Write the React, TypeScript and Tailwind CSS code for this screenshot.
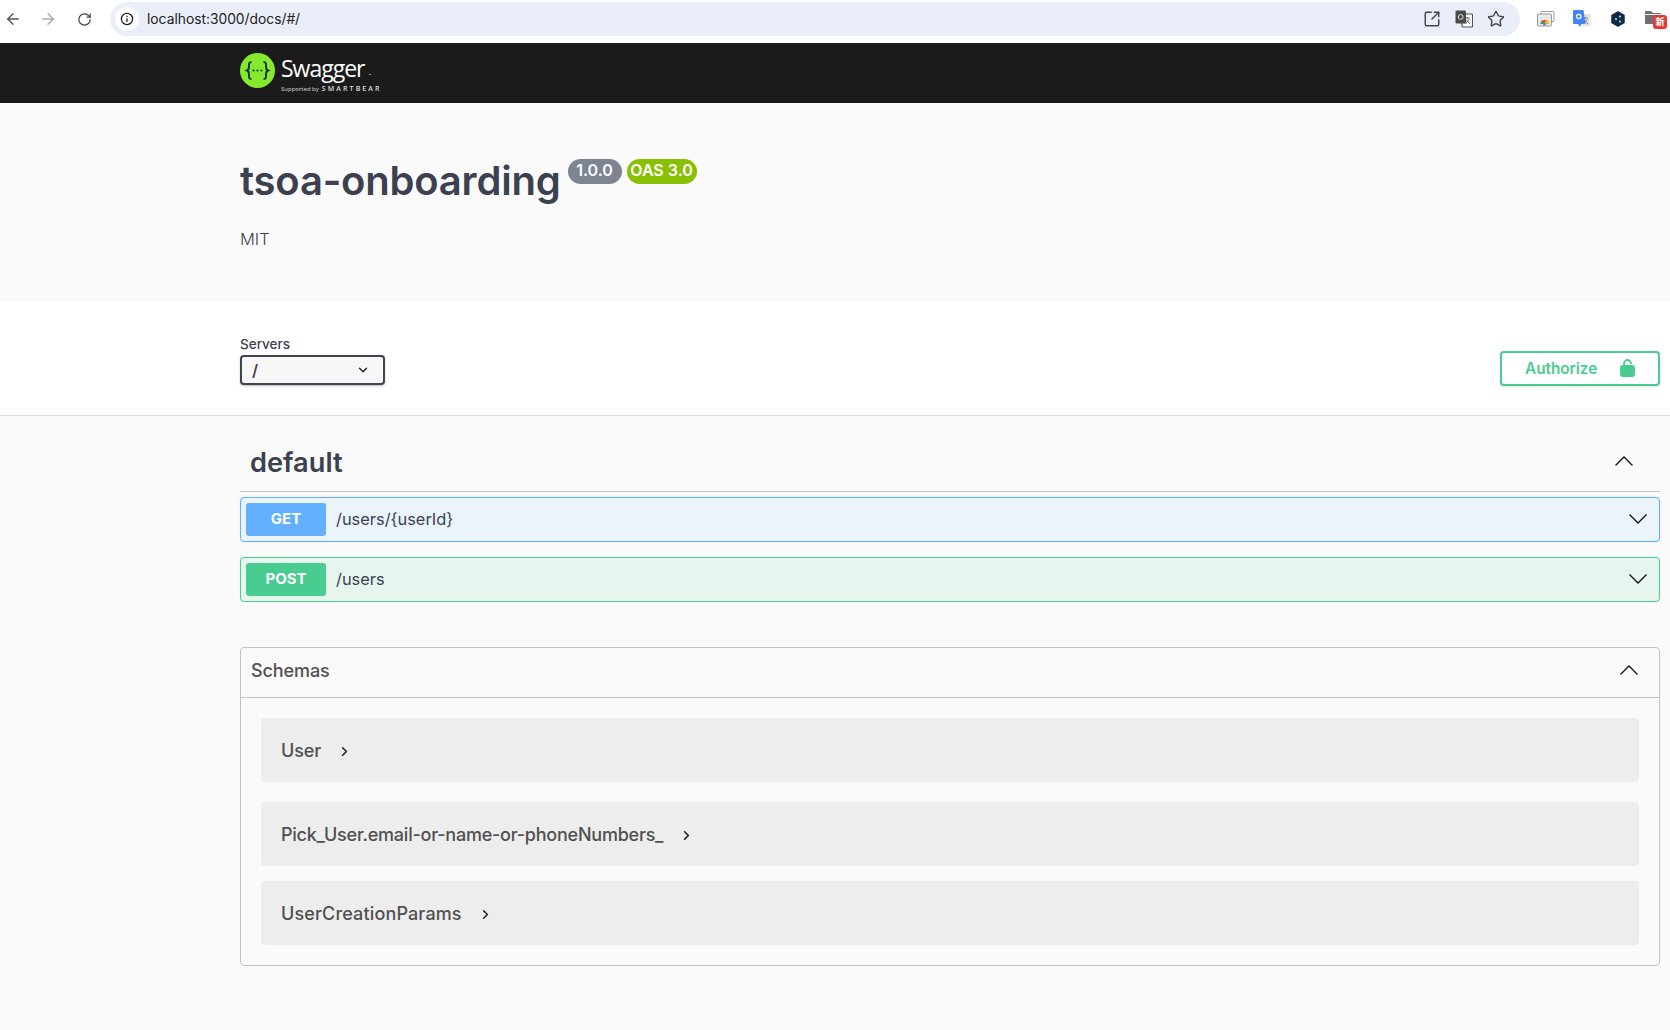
import { ArrowLeft, ArrowRight, RotateCw, Star, SquareArrowOutUpRight, ChevronDown, ChevronRight } from 'lucide-react';

const FONT = "font-['Inter',sans-serif]";

const Caret = ({ up = false }: { up?: boolean }) => (
  <svg width="20" height="20" viewBox="0 0 20 20" fill="none" stroke="#111" strokeWidth="1.3">
    <path d={up ? 'M1.5 14.5 10 6l8.5 8.5' : 'M1.5 5.5 10 14l8.5-8.5'} />
  </svg>
);

const TranslateIcon = () => (
  <svg width="18" height="18" viewBox="0 0 18 18">
    <rect x="7" y="4" width="10.5" height="13" rx="1" fill="#fff" stroke="#555" strokeWidth="1.2" />
    <path d="M10 8h5M12.5 7v1.5M10.5 14l4-5M11 9.5l4 4.5" stroke="#555" strokeWidth="0.9" fill="none" />
    <rect x="0.5" y="0.5" width="10.5" height="13" rx="1.2" fill="#4a4a4a" />
    <circle cx="5.7" cy="7" r="2.4" fill="none" stroke="#ddd" strokeWidth="1" />
  </svg>
);

const ToolbarExtensions = () => (
  <div className="flex items-center ml-[17px] gap-[18px] h-[34px]">
    <svg width="18" height="16" viewBox="0 0 18 16">
      <rect x="4" y="0.5" width="13" height="10" rx="1" fill="#fff" stroke="#999" />
      <rect x="0.5" y="3" width="14" height="12" rx="1" fill="#e9e9e9" stroke="#999" />
      <path d="M3.5 13a4 4 0 0 1 8 0z" fill="#ea4335" />
      <path d="M7.5 13a4 4 0 0 1 4-4v4z" fill="#fbbc05" />
      <path d="M3.5 13a4 4 0 0 1 2-3.4L7.5 13z" fill="#34a853" />
      <circle cx="7.5" cy="13" r="1.5" fill="#4285f4" />
    </svg>
    <svg width="18" height="18" viewBox="0 0 18 18">
      <rect x="7" y="4" width="10.5" height="12" fill="#e4e4e4" />
      <path d="M10 8h5M12.5 7v1.5M10.5 14l4-5M11 9.5l4 4.5" stroke="#777" strokeWidth="0.9" fill="none" />
      <path d="M0 1a1 1 0 0 1 1-1h9.5l2 14H8l-1 3-2-3H1a1 1 0 0 1-1-1z" fill="#4285f4" />
      <circle cx="5.7" cy="6.5" r="2.2" fill="none" stroke="#fff" strokeWidth="1.2" />
    </svg>
    <svg width="18" height="18" viewBox="0 0 18 18">
      <path d="M9 2 15 5.500v7L9 16 3 12.500v-7z" fill="#13294b" stroke="#13294b" strokeWidth="1.5" strokeLinejoin="round" />
      <circle cx="11" cy="6.500" r="1" fill="#8fd" />
      <circle cx="7" cy="9" r="1" fill="#8fd" />
      <circle cx="11" cy="11.500" r="1" fill="#8fd" />
    </svg>
    <div className="relative w-[20px] h-[18px]">
      <svg width="16" height="13" viewBox="0 0 16 13" className="mt-[1px]">
        <path d="M0 1a1 1 0 0 1 1-1h5l2 2h7a1 1 0 0 1 1 1v9a1 1 0 0 1-1 1H1a1 1 0 0 1-1-1z" fill="#6f6f6f" />
        <rect x="0" y="3" width="16" height="1" fill="#eee" />
      </svg>
      <span className="absolute left-[8px] top-[5px] w-[14px] h-[14px] rounded-[3px] bg-[#e53935] text-white text-[9px] leading-[14px] text-center font-bold font-['Noto_Sans_CJK_JP',sans-serif]">新</span>
    </div>
  </div>
);

const BrowserBar = () => (
  <div className={`h-[43px] bg-white flex items-start pt-[2px] ${FONT}`}>
    <div className="flex items-center h-[34px] gap-[17px] pl-[4px] w-[110px]">
      <ArrowLeft size={18} strokeWidth={1.8} className="text-[#555]" />
      <ArrowRight size={18} strokeWidth={1.8} className="text-[#aaa]" />
      <RotateCw size={15} strokeWidth={2} className="text-[#444] ml-[3px]" />
    </div>
    <div className="w-[1410px] h-[34px] rounded-full bg-[#e9eef8] flex items-center pl-[5px] pr-[15px]">
      <span className="w-[24px] h-[24px] rounded-full bg-white flex items-center justify-center">
        <svg width="14" height="14" viewBox="0 0 14 14" fill="none" stroke="#222" strokeWidth="1.3">
          <circle cx="7" cy="7" r="5.6" />
          <path d="M7 6.300v3.700M7 3.700v1.400" />
        </svg>
      </span>
      <span className="ml-[8px] text-[13.8px] text-[#222]">localhost:3000/docs/#/</span>
      <div className="ml-auto flex items-center gap-[14px]">
        <SquareArrowOutUpRight size={18} strokeWidth={1.9} className="text-[#444]" />
        <TranslateIcon />
        <Star size={18} strokeWidth={1.9} className="text-[#444]" />
      </div>
    </div>
    <ToolbarExtensions />
  </div>
);

const SwaggerHeader = () => (
  <div className="h-[60px] bg-[#1b1b1b] pl-[240px] flex items-center">
    <svg width="35" height="35" viewBox="0 0 35 35" className="mb-[5px]">
      <circle cx="17.500" cy="17.500" r="17.500" fill="#85ea2d" />
      <path d="M11.500 9c-3 0-2.500 2.200-2.500 4.700 0 2-.8 3.300-2 3.800 1.200.5 2 1.800 2 3.800 0 2.500-.5 4.700 2.500 4.700M23.500 9c3 0 2.500 2.200 2.500 4.700 0 2 .8 3.300 2 3.800-1.200.5-2 1.800-2 3.800 0 2.500.5 4.700-2.500 4.700" fill="none" stroke="#173646" strokeWidth="2" />
      <circle cx="13.500" cy="17.500" r="1.100" fill="#173646" />
      <circle cx="17.500" cy="17.500" r="1.100" fill="#173646" />
      <circle cx="21.500" cy="17.500" r="1.100" fill="#173646" />
    </svg>
    <div className="ml-[6px] pt-[2px] flex flex-col text-white font-['Open_Sans',sans-serif]">
      <span className="flex items-end text-[23px] leading-[28px] tracking-[-1px]">
        Swagger
        <span className="ml-[4px] mb-[7px] w-[2px] h-[1px] bg-[#999]" />
      </span>
      <span className="mt-[2px] flex items-baseline gap-[3px] leading-[10px] text-[#ddd]">
        <span className="text-[6px]">Supported by</span>
        <span className="text-[7px] tracking-[2.100px] font-semibold">SMARTBEAR</span>
      </span>
    </div>
  </div>
);

const InfoSection = () => (
  <div className="h-[198px] bg-[#fafafa] pl-[240px] pt-[54px]">
    <div className="flex items-start">
      <h1 className="text-[40px] leading-[48px] font-semibold text-[#3b4151] tracking-[-0.2px]">tsoa-onboarding</h1>
      <span className="ml-[7px] mt-[2px] h-[25px] w-[54px] rounded-full bg-[#7d8492] text-white text-[16px] leading-[23px] font-semibold text-center">1.0.0</span>
      <span className="ml-[5px] mt-[2px] h-[25px] w-[70px] rounded-full bg-[#89bf04] text-white text-[16px] leading-[23px] font-semibold text-center">OAS 3.0</span>
    </div>
    <p className="mt-[23px] text-[16.500px] leading-[22px] font-light text-[#3b4151]">MIT</p>
  </div>
);

const ServersBar = () => (
  <div className="h-[115px] bg-white border-b border-[#dcdcdc] pl-[240px] pr-[10px] shadow-[0_1px_2px_rgba(0,0,0,0.08)] flex justify-between items-start pt-[35px]">
    <div className="flex flex-col">
      <span className="text-[13.500px] leading-[16px] font-medium text-[#3b4151]">Servers</span>
      <div className="mt-[3px] w-[145px] h-[30px] rounded-[4px] border-2 border-[#41444e] bg-[#f7f7f7] shadow-[0_1px_2px_rgba(0,0,0,0.25)] flex items-center justify-between pl-[10px] pr-[13px]">
        <span className="text-[16px] font-semibold text-[#3b4151]">/</span>
        <ChevronDown size={14} strokeWidth={2.4} className="text-[#222]" />
      </div>
    </div>
    <button className="mt-[15px] w-[160px] h-[35px] rounded-[4px] border-2 border-[#49cc90] bg-white flex items-center pl-[23px] text-[#49cc90] text-[15.300px] font-semibold shadow-[0_1px_2px_rgba(0,0,0,0.1)]">
      <span className="mt-[2px]">Authorize</span>
      <svg width="15" height="18" viewBox="0 0 15 18" className="ml-[23px] mb-[1px]">
        <path d="M4 7V4.500a3.500 3.500 0 0 1 7 0V5" fill="none" stroke="#49cc90" strokeWidth="1.800" />
        <rect x="0" y="6" width="15" height="12" rx="3" fill="#49cc90" />
      </svg>
    </button>
  </div>
);

const OpRow = ({ method, path, border, bg, badge, gap }: { method: string; path: string; border: string; bg: string; badge: string; gap: string }) => (
  <div className={`h-[45px] rounded-[4px] border ${border} ${bg} ${gap} flex items-center pl-[5px] pr-[11px] shadow-[0_0_2px_rgba(0,0,0,0.08)]`}>
    <span className={`w-[80px] h-[33px] pb-[1px] rounded-[3px] ${badge} text-white text-[15px] font-bold flex items-center justify-center`}>{method}</span>
    <span className="ml-[10px] mb-[1px] text-[16.400px] text-[#3b4151]">{path}</span>
    <span className="ml-auto mb-[2px]"><Caret /></span>
  </div>
);

const SchemaRow = ({ name, gap, tracking }: { name: string; gap: string; tracking: string }) => (
  <div className={`h-[64px] rounded-[4px] bg-[#ededed] ${gap} flex items-center pl-[20px]`}>
    <span className={`text-[18px] font-medium text-[#505050] ${tracking}`}>{name}</span>
    <ChevronRight size={15} strokeWidth={2.6} className="ml-[16px] mt-[3px] text-[#222]" />
  </div>
);

const Operations = () => (
  <div className="bg-[#fafafa] pl-[240px] pr-[10px] pb-[65px]">
    <div className="h-[76px] border-b border-[#c4c4c4] flex items-center justify-between pl-[10px] pr-[26px]">
      <h2 className="mt-[20px] text-[27.200px] font-semibold text-[#3b4151]">default</h2>
      <span className="mt-[14px]"><Caret up /></span>
    </div>
    <div className="mt-[5px]">
      <OpRow method="GET" path="/users/{userId}" border="border-[#61affe]" bg="bg-[#ebf3fb]" badge="bg-[#61affe]" gap="mb-[15px]" />
      <OpRow method="POST" path="/users" border="border-[#49cc90]" bg="bg-[#e7f5ef]" badge="bg-[#49cc90]" gap="" />
    </div>
    <div className="mt-[45px] rounded-[4px] border border-[#c4c4c4]">
      <div className="h-[50px] border-b border-[#c4c4c4] flex items-center justify-between pl-[10px] pr-[20px]">
        <span className="mb-[4px] text-[18px] font-medium text-[#505050] tracking-[-0.1px]">Schemas</span>
        <span className="mb-[6px]"><Caret up /></span>
      </div>
      <div className="px-[20px] pt-[20px] pb-[20px]">
        <SchemaRow name="User" gap="mb-[20px]" tracking="tracking-[-0.1px]" />
        <SchemaRow name="Pick_User.email-or-name-or-phoneNumbers_" gap="mb-[15px]" tracking="tracking-[-0.23px]" />
        <SchemaRow name="UserCreationParams" gap="" tracking="tracking-[0.14px]" />
      </div>
    </div>
  </div>
);

export default function App() {
  return (
    <div className={`w-full min-h-[1030px] bg-[#fafafa] ${FONT}`}>
      <BrowserBar />
      <SwaggerHeader />
      <InfoSection />
      <ServersBar />
      <Operations />
    </div>
  );
}
